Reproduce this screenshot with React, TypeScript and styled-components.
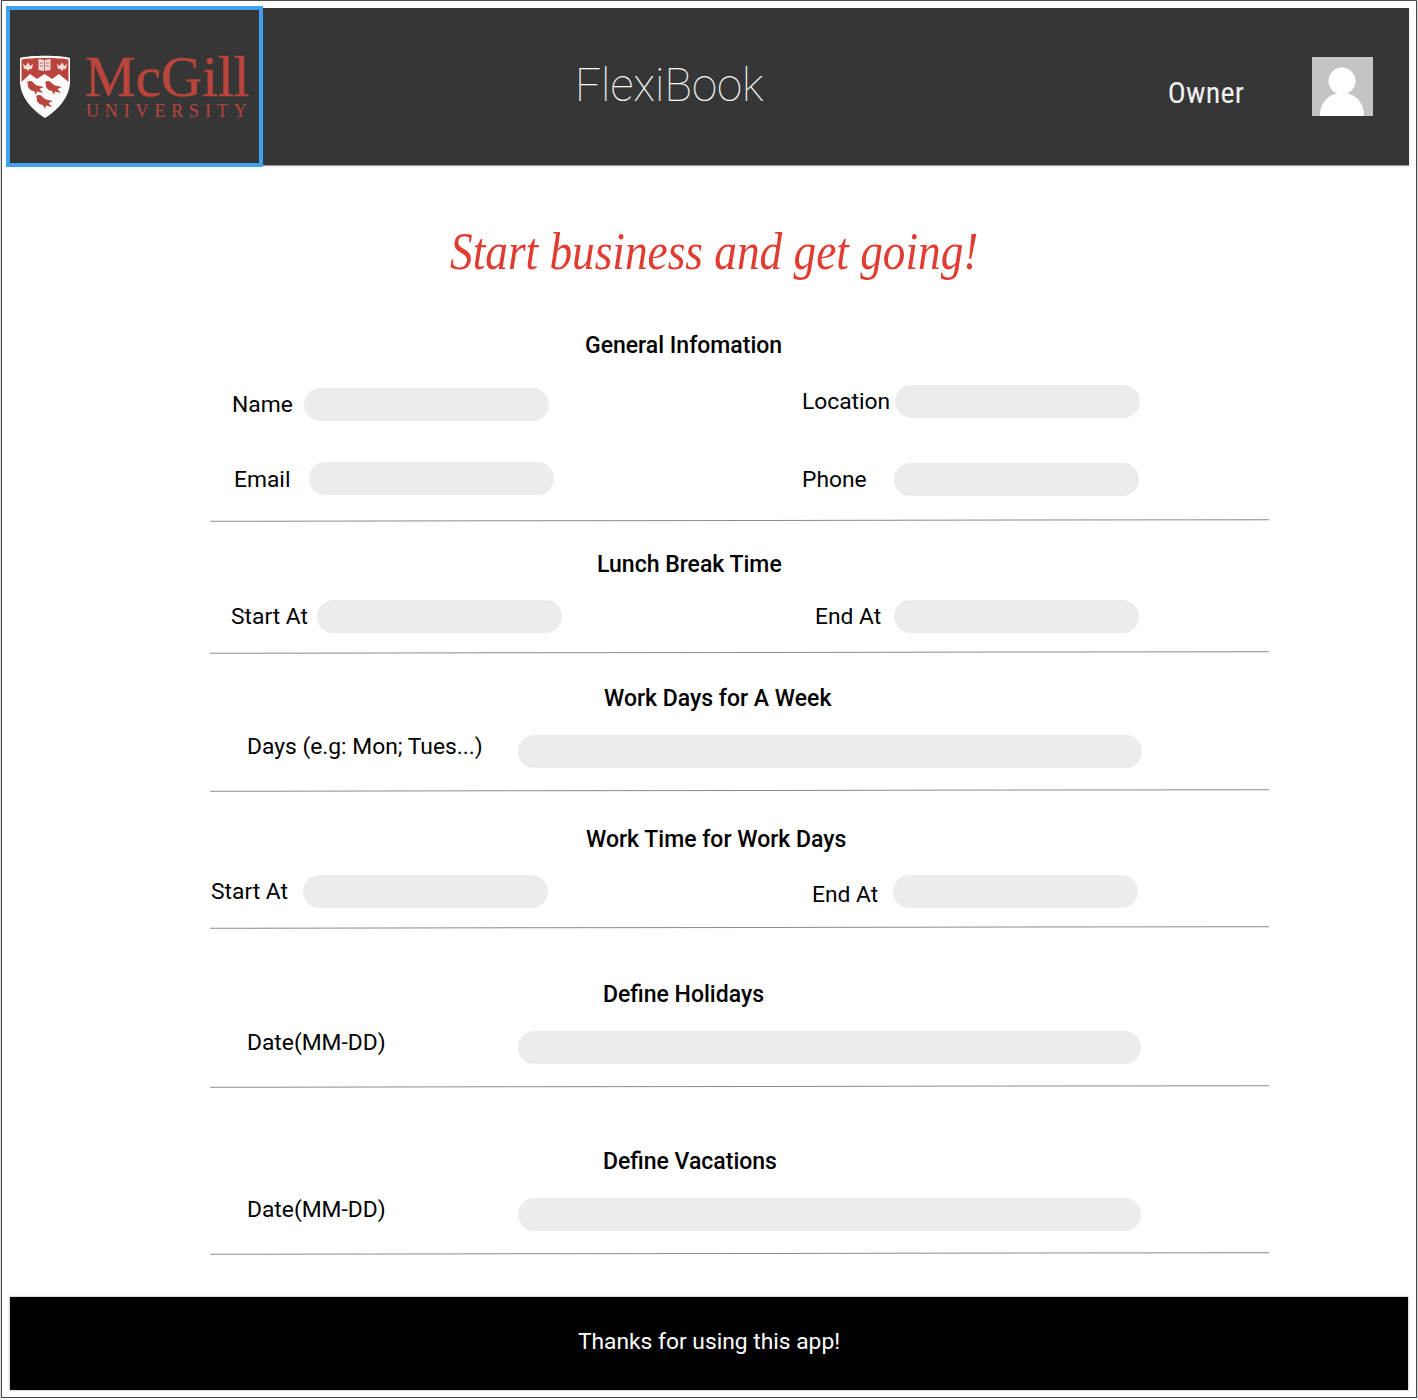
import styled, { createGlobalStyle } from "styled-components"

const Global = createGlobalStyle`
    html, body {
        margin: 0;
        padding: 0;
        background: #fff;
        font-family: Roboto, "Liberation Sans", sans-serif;
        color: #000;
    }
`;

const Frame = styled.div`
    box-sizing: border-box;
    width: 1416px;
    height: 1398px;
    margin-left: 1px;
    padding: 7px 6px 0;
    background: #fff;
    border: 1px solid #4a4a4a;
    box-shadow: 0 1px 2px #8a8a8a;
`;

const Header = styled.header`
    display: flex;
    align-items: center;
    width: 1401px;
    height: 157px;
    background: #363636;
    box-shadow: 0 1px 1px #9a9a9a;
`;

const LogoBox = styled.div`
    box-sizing: border-box;
    flex: none;
    display: flex;
    align-items: center;
    gap: 15px;
    width: 257px;
    height: 161px;
    margin: -2px 0 -2px -2px;
    padding-left: 10px;
    border: 4px solid #42a0f0;
    background: #363636;
`;

const Wordmark = styled.div`
    display: flex;
    flex-direction: column;
    font-family: "Liberation Serif", serif;
    color: #b9453c;
`;

const McGill = styled.div`
    margin-top: 2px;
    font-size: 57px;
    line-height: 46px;
    -webkit-text-stroke: 0.5px #b9453c;
`;

const University = styled.div`
    margin: 1px 0 0 1px;
    font-size: 18px;
    line-height: 20px;
    letter-spacing: 5.85px;
    white-space: nowrap;
`;

const Brand = styled.div`
    margin: -1px 0 0 312px;
    font-size: 45.5px;
    font-weight: 100;
    line-height: 54px;
    color: #f7f7f7;
`;

const Owner = styled.div`
    margin: 12px 0 0 auto;
    font-size: 30px;
    font-stretch: 75%;
    letter-spacing: 0.2px;
    line-height: 34px;
    color: #f0f0f0;
`;

const Avatar = styled.svg`
    flex: none;
    display: block;
    margin: 0 36px 1px 68px;
`;

const Title = styled.h1`
    height: 80px;
    margin: 50px 0 0;
    padding-left: 442px;
    font-family: "Liberation Serif", serif;
    font-size: 52px;
    font-style: italic;
    font-weight: 400;
    line-height: 74px;
    color: #e03c31;
    white-space: nowrap;
    transform: scaleX(0.871);
    transform-origin: 442px 0;
`;

const Section = styled.section<{ $pad: number }>`
    width: 1059px;
    margin-left: 202px;
    padding-top: ${(p) => p.$pad}px;
`;

const Heading = styled.h2<{ $left: number }>`
    height: 30px;
    margin: 0;
    padding-left: ${(p) => p.$left}px;
    font-size: 23px;
    font-weight: 500;
    line-height: 32px;
    white-space: nowrap;
`;

const Row = styled.div<{ $top: number }>`
    display: grid;
    grid-template-columns: 592px 1fr;
    align-items: start;
    margin-top: ${(p) => p.$top}px;
`;

const Field = styled.div<{ $inset: number; $label: number; $drop?: number }>`
    display: grid;
    grid-template-columns: ${(p) => p.$label}px auto;
    justify-content: start;
    margin-top: ${(p) => p.$drop ?? 0}px;
    padding-left: ${(p) => p.$inset}px;
`;

const Label = styled.label<{ $shift?: number }>`
    height: 33px;
    margin-top: ${(p) => p.$shift ?? 0}px;
    font-size: 22.8px;
    line-height: 33px;
    white-space: nowrap;
`;

const Pill = styled.div<{ $wide?: number }>`
    width: ${(p) => p.$wide ?? 245}px;
    height: 33px;
    border-radius: 17px;
    background: #ececec;
`;

const Rule = styled.div<{ $top: number }>`
    height: 1px;
    margin-top: ${(p) => p.$top}px;
    background: #8c8c8c;
    transform: rotate(-0.08deg);
`;

const Footer = styled.footer`
    box-sizing: border-box;
    display: flex;
    align-items: center;
    justify-content: center;
    width: 1398px;
    height: 93px;
    margin: 43px 0 0 2px;
    padding-bottom: 4px;
    background: #000;
    box-shadow: 0 0 2px #8a8a8a;
    font-size: 22.8px;
    color: #fff;
`;

const Bird = ({ x, y }: { x: number; y: number }) => (
    <path
        transform={`translate(${x} ${y})`}
        d="M-8 -6 C-5 -8 -2 -7 -1 -4.500 L2 -2.500 L9 -1 L4.500 1 L8 5 L2 3.500 L1 7 L-1 3 C-5 2.500 -8 -1 -7 -3.500 Z"
        fill="#b9453c"
    />
);

const Crown = ({ x }: { x: number }) => (
    <path
        transform={`translate(${x} 12)`}
        d="M-5 -3.500 L-2.500 -1 L0 -4.500 L2.500 -1 L5 -3.500 L4 2 L1 2 L1 3.500 L-1 3.500 L-1 2 L-4 2 Z"
        fill="#f1dcd9"
    />
);

const Shield = () => (
    <svg width="50" height="63" viewBox="0 0 50 63" style={{ flex: "none" }}>
        <path d="M0 3 C8 0 42 0 50 3 L50 26 C50 42 38 55 25 63 C12 55 0 42 0 26 Z" fill="#fff" />
        <path
            d="M1.500 4.500 C9 2.500 41 2.500 48.500 4.500 L48.500 27 L39 19 L32 24 L24.500 19 L17 24 L10 19 L1.500 27 Z"
            fill="#b9453c"
        />
        <Crown x={8} />
        <Crown x={42} />
        <path d="M18.500 4 L24.500 5 L30.500 4 L30.500 15 L24.500 16 L18.500 15 Z" fill="#f1dcd9" />
        <path d="M24.500 5 L24.500 16 M20 8 L23 8 M20 11 L23 11 M26 8 L29 8 M26 11 L29 11" stroke="#b9453c" strokeWidth="0.8" />
        <Bird x={15} y={33} />
        <Bird x={33} y={33} />
        <Bird x={24} y={47} />
    </svg>
);

const App = () => {
    return (
        <>
            <Global />
            <Frame>
                <Header>
                    <LogoBox>
                        <Shield />
                        <Wordmark>
                            <McGill>McGill</McGill>
                            <University>UNIVERSITY</University>
                        </Wordmark>
                    </LogoBox>
                    <Brand>FlexiBook</Brand>
                    <Owner>Owner</Owner>
                    <Avatar width="61" height="59" viewBox="0 0 61 59">
                        <rect width="61" height="59" fill="#c4c4c4" />
                        <path d="M8 59 C8 44 18 36 30 36 C42 36 52 44 52 59 Z" fill="#fff" />
                        <circle cx="30" cy="24" r="13.500" fill="#fff" />
                    </Avatar>
                </Header>

                <Title>Start business and get going!</Title>

                <Section $pad={35}>
                    <Heading $left={375}>General Infomation</Heading>
                    <Row $top={25}>
                        <Field $inset={22} $label={72} $drop={3}>
                            <Label>Name</Label>
                            <Pill />
                        </Field>
                        <Field $inset={0} $label={93}>
                            <Label>Location</Label>
                            <Pill />
                        </Field>
                    </Row>
                    <Row $top={41}>
                        <Field $inset={24} $label={75}>
                            <Label $shift={1}>Email</Label>
                            <Pill />
                        </Field>
                        <Field $inset={0} $label={92} $drop={1}>
                            <Label>Phone</Label>
                            <Pill />
                        </Field>
                    </Row>
                    <Rule $top={24} />
                </Section>

                <Section $pad={28}>
                    <Heading $left={387}>Lunch Break Time</Heading>
                    <Row $top={21}>
                        <Field $inset={21} $label={86}>
                            <Label>Start At</Label>
                            <Pill />
                        </Field>
                        <Field $inset={13} $label={79}>
                            <Label>End At</Label>
                            <Pill />
                        </Field>
                    </Row>
                    <Rule $top={19} />
                </Section>

                <Section $pad={30}>
                    <Heading $left={394}>Work Days for A Week</Heading>
                    <Row $top={22}>
                        <Field $inset={37} $label={271}>
                            <Label $shift={-5}>Days (e.g: Mon; Tues...)</Label>
                            <Pill $wide={624} />
                        </Field>
                    </Row>
                    <Rule $top={22} />
                </Section>

                <Section $pad={33}>
                    <Heading $left={376}>Work Time for Work Days</Heading>
                    <Row $top={21}>
                        <Field $inset={1} $label={92}>
                            <Label>Start At</Label>
                            <Pill />
                        </Field>
                        <Field $inset={10} $label={81}>
                            <Label $shift={3}>End At</Label>
                            <Pill />
                        </Field>
                    </Row>
                    <Rule $top={16} />
                </Section>

                <Section $pad={51}>
                    <Heading $left={393}>Define Holidays</Heading>
                    <Row $top={22}>
                        <Field $inset={37} $label={271}>
                            <Label $shift={-5}>Date(MM-DD)</Label>
                            <Pill $wide={623} />
                        </Field>
                    </Row>
                    <Rule $top={22} />
                </Section>

                <Section $pad={59}>
                    <Heading $left={393}>Define Vacations</Heading>
                    <Row $top={22}>
                        <Field $inset={37} $label={271}>
                            <Label $shift={-5}>Date(MM-DD)</Label>
                            <Pill $wide={623} />
                        </Field>
                    </Row>
                    <Rule $top={22} />
                </Section>

                <Footer>Thanks for using this app!</Footer>
            </Frame>
        </>
    )
}

export default App;
